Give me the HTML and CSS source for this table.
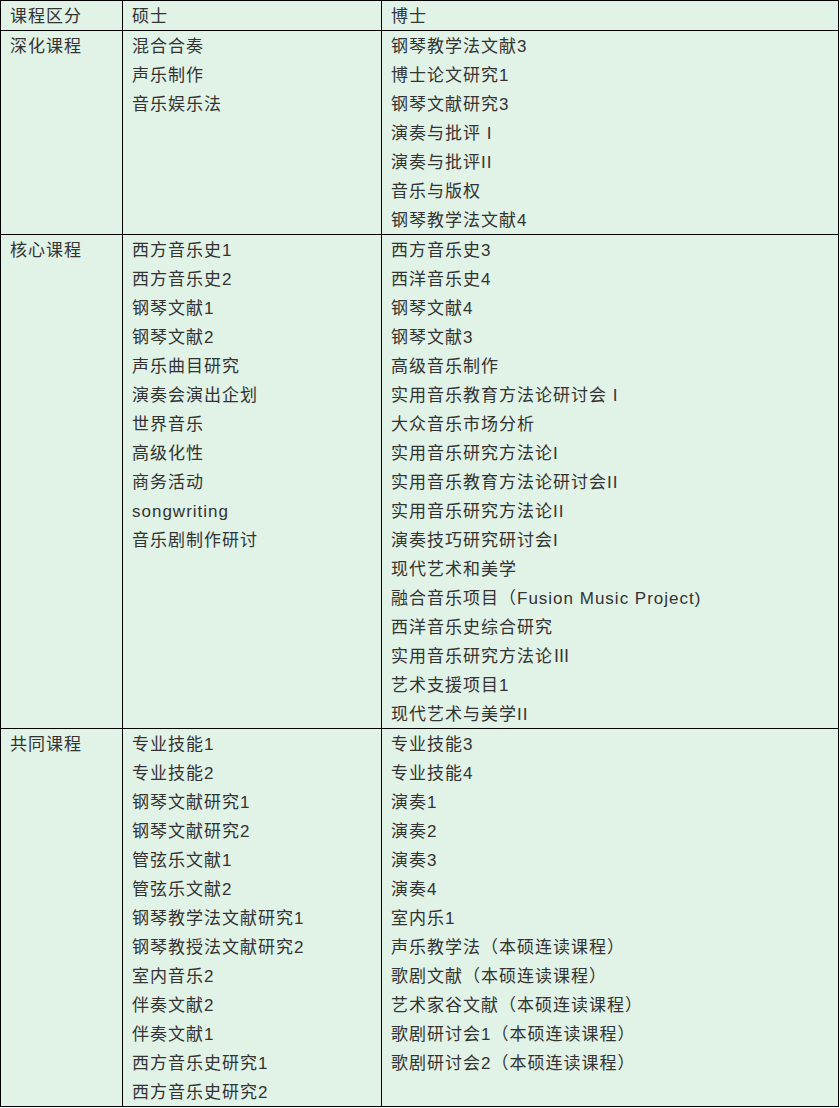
FILE: index.html
```html
<!DOCTYPE html>
<html lang="zh-CN">
<head>
<meta charset="utf-8">
<title>课程区分</title>
<link rel="stylesheet" href="styles.css">
</head>
<body>
<table class="courses">
  <colgroup>
    <col class="c1">
    <col class="c2">
    <col class="c3">
  </colgroup>
  <thead>
    <tr><th><div>课程区分</div></th><th><div>硕士</div></th><th><div>博士</div></th></tr>
  </thead>
  <tbody>
    <tr>
      <td><div>深化课程</div></td>
      <td><div>混合合奏</div><div>声乐制作</div><div>音乐娱乐法</div></td>
      <td><div>钢琴教学法文献3</div><div>博士论文研究1</div><div>钢琴文献研究3</div><div>演奏与批评 I</div><div>演奏与批评II</div><div>音乐与版权</div><div>钢琴教学法文献4</div></td>
    </tr>
    <tr>
      <td><div>核心课程</div></td>
      <td><div>西方音乐史1</div><div>西方音乐史2</div><div>钢琴文献1</div><div>钢琴文献2</div><div>声乐曲目研究</div><div>演奏会演出企划</div><div>世界音乐</div><div>高级化性</div><div>商务活动</div><div>songwriting</div><div>音乐剧制作研讨</div></td>
      <td><div>西方音乐史3</div><div>西洋音乐史4</div><div>钢琴文献4</div><div>钢琴文献3</div><div>高级音乐制作</div><div>实用音乐教育方法论研讨会 I</div><div>大众音乐市场分析</div><div>实用音乐研究方法论I</div><div>实用音乐教育方法论研讨会II</div><div>实用音乐研究方法论II</div><div>演奏技巧研究研讨会I</div><div>现代艺术和美学</div><div>融合音乐项目（Fusion Music Project)</div><div>西洋音乐史综合研究</div><div>实用音乐研究方法论Ⅲ</div><div>艺术支援项目1</div><div>现代艺术与美学II</div></td>
    </tr>
    <tr>
      <td><div>共同课程</div></td>
      <td><div>专业技能1</div><div>专业技能2</div><div>钢琴文献研究1</div><div>钢琴文献研究2</div><div>管弦乐文献1</div><div>管弦乐文献2</div><div>钢琴教学法文献研究1</div><div>钢琴教授法文献研究2</div><div>室内音乐2</div><div>伴奏文献2</div><div>伴奏文献1</div><div>西方音乐史研究1</div><div>西方音乐史研究2</div></td>
      <td><div>专业技能3</div><div>专业技能4</div><div>演奏1</div><div>演奏2</div><div>演奏3</div><div>演奏4</div><div>室内乐1</div><div>声乐教学法（本硕连读课程）</div><div>歌剧文献（本硕连读课程）</div><div>艺术家谷文献（本硕连读课程）</div><div>歌剧研讨会1（本硕连读课程）</div><div>歌剧研讨会2（本硕连读课程）</div></td>
    </tr>
  </tbody>
</table>
</body>
</html>
```
FILE: styles.css
```css
html, body {
  margin: 0;
  padding: 0;
  background: #ffffff;
}

.courses {
  border-collapse: collapse;
  table-layout: fixed;
  width: 838px;
  background: #e1f2e6;
  color: #333333;
  font-family: "Liberation Sans", "Noto Sans CJK SC", sans-serif;
  font-size: 17px;
  letter-spacing: 1px;
  line-height: 29px;
}

.c1 { width: 122px; }
.c2 { width: 259px; }
.c3 { width: 457px; }

.courses th,
.courses td {
  border: 1px solid #000000;
  padding: 0 8px 0 9px;
  text-align: left;
  vertical-align: top;
  font-weight: normal;
  white-space: nowrap;
}

.courses th > div,
.courses td > div {
  line-height: 27px;
  padding-top: 2px;
}
```
